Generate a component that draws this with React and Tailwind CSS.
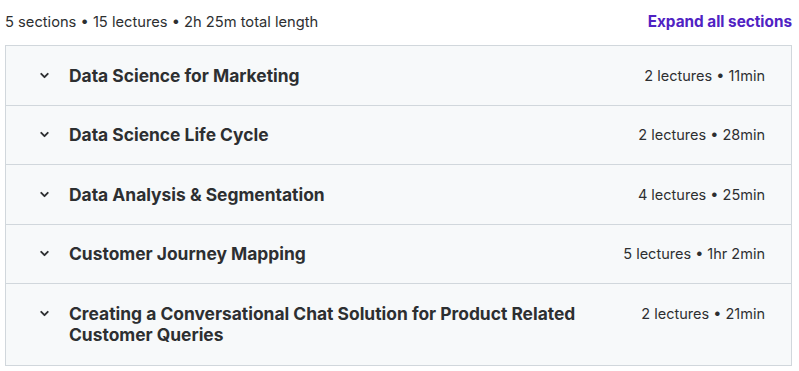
import React from "react";

const sections = [
  { title: "Data Science for Marketing", meta: "2 lectures • 11min" },
  { title: "Data Science Life Cycle", meta: "2 lectures • 28min" },
  { title: "Data Analysis & Segmentation", meta: "4 lectures • 25min" },
  { title: "Customer Journey Mapping", meta: "5 lectures • 1hr 2min" },
  { title: "Creating a Conversational Chat Solution for Product Related Customer Queries", meta: "2 lectures • 21min" },
];

function Chevron() {
  return (
    <svg width="13" height="13" viewBox="0 0 24 24" fill="none" stroke="#2d2f31" strokeWidth="3.5" strokeLinecap="round" strokeLinejoin="round">
      <path d="M6 9l6 6 6-6" />
    </svg>
  );
}

export default function App() {
  return (
    <div className="w-[799px] h-[371px] bg-white text-[#2d2f31] pl-[5px]" style={{ fontFamily: "Inter, 'Noto Sans', sans-serif" }}>
      <div className="flex items-center justify-between h-[45px] pb-[1px] w-[787px]">
        <span className="text-[14.7px] text-[#2d2f31]">5 sections • 15 lectures • 2h 25m total length</span>
        <span className="text-[15.3px] font-bold text-[#5022c3]">Expand all sections</span>
      </div>
      <div className="border border-[#d1d7dc] w-[787px]">
        {sections.map((s, i) => (
          <div key={i} className={`flex items-start bg-[#f7f9fa] pl-[32px] pr-[26px] pt-[18.5px] ${i === 4 ? "pb-[20px]" : "pb-[19px]"} ${i > 0 ? "border-t border-[#d1d7dc]" : ""}`}>
            <div className="w-[31px] h-[21px] shrink-0 flex items-center">
              <Chevron />
            </div>
            <div className="flex-1 text-[17.4px] font-bold leading-[21px] pr-[52px]">{s.title}</div>
            <div className="text-[14.5px] leading-[21px] whitespace-nowrap">{s.meta}</div>
          </div>
        ))}
      </div>
    </div>
  );
}
